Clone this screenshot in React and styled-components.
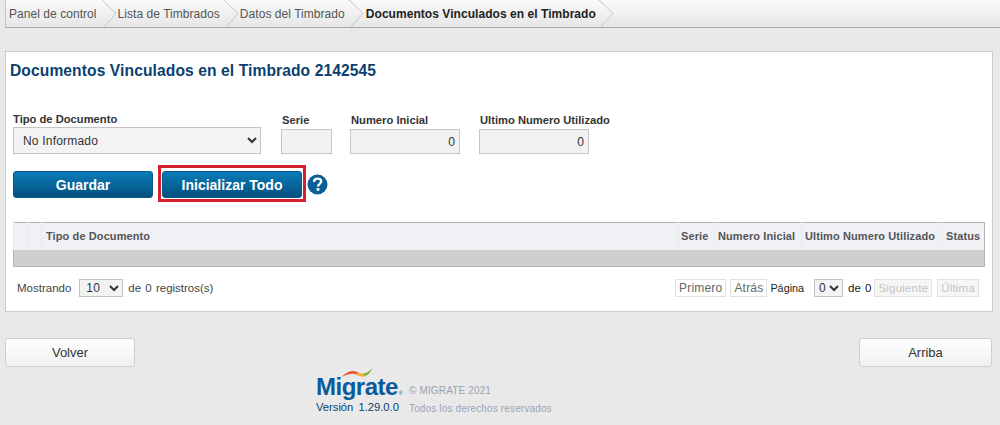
import React from "react";
import styled, { createGlobalStyle } from "styled-components";

const Global = createGlobalStyle`
  html, body { margin: 0; padding: 0; height: 425px; overflow: hidden; }
  body { background: #e9e9e9; font-family: "Liberation Sans", Arial, sans-serif; color: #333; }
`;
const Page = styled.div`display: flex; flex-direction: column; height: 425px;`;
const Crumbs = styled.nav`
  display: flex; align-items: stretch; height: 27px; margin-left: 5px;
  background: linear-gradient(#fafafa, #e6e6e6);
  border-left: 1px solid #c4c4c4; border-bottom: 1px solid #a9a9a9;
  font-size: 12px; letter-spacing: 0.05px;
`;
const Crumb = styled.div`
  display: flex; align-items: center; padding-left: ${p => p.$pad}px; color: ${p => p.$active ? "#222" : "#555"};
  font-weight: ${p => p.$active ? 700 : 400}; white-space: nowrap;
`;
const Chevron = styled.svg`width: 16px; height: 27px; flex: none; margin-left: ${p => p.$gap}px;`;
const Panel = styled.section`
  margin: 23px 7px 0 5px; height: 261px; box-sizing: border-box; background: #fff;
  border: 1px solid #cbcbcb; padding: 10px 6px 0 4px;
`;
const Title = styled.h1`margin: 0; font-size: 15.6px; line-height: 17px; font-weight: 700; color: #0b3f70; letter-spacing: 0.1px;`;
const FormRow = styled.div`display: flex; align-items: flex-end; margin: 31px 0 0 3px; height: 44px;`;
const Field = styled.div`display: flex; flex-direction: column; margin-left: ${p => p.$ml || 0}px;`;
const Label = styled.label`font-size: 11.2px; line-height: 14px; font-weight: 700; color: #333; margin-left: ${p => p.$ml || 0}px; margin-bottom: ${p => p.$mb}px; white-space: nowrap;`;
const Select = styled.select`
  width: ${p => p.$w}px; height: ${p => p.$h}px; box-sizing: border-box; background: #f3f3f3; color: #333;
  border: 1px solid #c4c4c4; font: ${p => p.$fs}px "Liberation Sans", Arial, sans-serif; padding-left: ${p => p.$pl}px; border-radius: 0;
  letter-spacing: 0.2px;
`;
const Input = styled.input`
  width: ${p => p.$w}px; height: 25px; box-sizing: border-box; background: #f2f2f2; border: 1px solid #c6c6c6;
  text-align: right; padding: 0 4px 0 0; font: 12px "Liberation Sans", Arial, sans-serif; color: #333;
`;
const Actions = styled.div`display: flex; align-items: center; margin: 17px 0 0 3px; height: 27px;`;
const Primary = styled.button`
  width: 140px; height: 27px; border: 1px solid #0a5a8e; border-radius: 3px; color: #fff; font: 700 14px "Liberation Sans", Arial, sans-serif;
  background: linear-gradient(#0a7cb8, #04507f); padding: 0; flex: none;
`;
const Highlight = styled.div`
  display: flex; flex: none; align-self: flex-start; margin: -6px 0 0 5px; padding: 3px 1px 1px; border: 3px solid #d3202c;
`;
const Help = styled.svg`width: 21px; height: 21px; margin-left: 1px; flex: none;`;
const Table = styled.table`
  width: 972px; margin: 24px 0 0 3px; border-collapse: collapse; table-layout: fixed; border: 1px solid #b5b5b5;
  font-size: 11px;
`;
const Th = styled.th`
  height: 27px; padding: 0 0 0 ${p => p.$pl || 0}px; background: #f0f1f5; color: #555; font-weight: 700; text-align: left; white-space: nowrap;
  border-left: 1px solid #eaebef; box-sizing: border-box; letter-spacing: 0.1px;
`;
const EmptyCell = styled.td`height: 16px; padding: 0; background: #cfcfcf;`;
const Pager = styled.div`display: flex; align-items: center; justify-content: space-between; margin: 12px 7px 0 7px; height: 18px; font-size: 11.5px; color: #444;`;
const Group = styled.div`display: flex; align-items: center;`;
const Txt = styled.span`margin: 0 ${p => p.$mr || 0}px 0 ${p => p.$ml || 0}px; white-space: nowrap; color: ${p => p.$c || "inherit"}; font-size: ${p => p.$fs || 11.5}px; word-spacing: 1px;`;
const PageBtn = styled.span`
  height: 16px; line-height: 16px; padding: 0 3px; border: 1px solid #e2e2e2; background: ${p => p.$off ? "#f6f6f6" : "#fff"}; color: ${p => p.$off ? "#c4c4c4" : "#666"};
  font-size: ${p => p.$off ? 11.5 : 12}px; margin-left: ${p => p.$ml || 0}px; letter-spacing: 0.2px;
`;
const NavRow = styled.div`display: flex; justify-content: space-between; margin: 26px 8px 0 5px;`;
const NavBtn = styled.button`
  width: ${p => p.$w}px; height: 29px; background: linear-gradient(#fff, #f0f0f0); border: 1px solid #cfcfcf; border-radius: 3px;
  font: 13px "Liberation Sans", Arial, sans-serif; color: #333; padding: 0;
`;
const Foot = styled.footer`display: flex; margin: 0 0 0 316px;`;
const Brand = styled.div`display: flex; flex-direction: column; width: 93px; position: relative;`;
const Swoosh = styled.svg`position: absolute; left: 24px; top: 0; width: 34px; height: 11px;`;
const Logo = styled.div`font: 700 24px/24px "Liberation Sans", Arial, sans-serif; color: #0a5a9c; letter-spacing: -0.5px; margin-top: 8px; height: 24px; white-space: nowrap;`;
const Reg = styled.span`font-size: 5px; letter-spacing: 0; font-weight: 400; margin-left: 1px;`;
const Version = styled.div`font-size: 11.2px; line-height: 14px; color: #0b3f70; margin-top: 1px; word-spacing: 2px; white-space: nowrap;`;
const Legal = styled.div`display: flex; flex-direction: column; font-size: 10px; color: #9aa3b2; margin-top: 18px; gap: 6px; line-height: 12px; letter-spacing: 0.15px;`;

const Arrow = ({ gap }) => (
  <Chevron $gap={gap} viewBox="0 0 16 27" aria-hidden="true">
    <path d="M0 0 L14 13.5 L2 27" fill="none" stroke="#c6c6c6" />
  </Chevron>
);

export default function App() {
  return (
    <Page>
      <Global />
      <Crumbs>
        <Crumb $pad={3}>Panel de control</Crumb>
        <Arrow gap={5} />
        <Crumb $pad={0}>Lista de Timbrados</Crumb>
        <Arrow gap={4} />
        <Crumb $pad={0}>Datos del Timbrado</Crumb>
        <Arrow gap={4} />
        <Crumb $pad={1} $active>Documentos Vinculados en el Timbrado</Crumb>
        <Arrow gap={3} />
      </Crumbs>
      <Panel>
        <Title>Documentos Vinculados en el Timbrado 2142545</Title>
        <FormRow>
          <Field>
            <Label $mb={1}>Tipo de Documento</Label>
            <Select $w={248} $h={27} $fs={12} $pl={5} defaultValue="n"><option value="n">No Informado</option></Select>
          </Field>
          <Field $ml={20}>
            <Label $mb={2} $ml={1}>Serie</Label>
            <Input $w={51} readOnly />
          </Field>
          <Field $ml={18}>
            <Label $mb={2} $ml={1}>Numero Inicial</Label>
            <Input $w={110} readOnly value="0" />
          </Field>
          <Field $ml={19}>
            <Label $mb={2} $ml={1}>Ultimo Numero Utilizado</Label>
            <Input $w={110} readOnly value="0" />
          </Field>
        </FormRow>
        <Actions>
          <Primary>Guardar</Primary>
          <Highlight><Primary>Inicializar Todo</Primary></Highlight>
          <Help viewBox="0 0 21 21" aria-hidden="true">
            <circle cx="10.5" cy="10.5" r="10" fill="#0a5f96" />
            <path d="M7 8 C7 5.6 8.6 4.6 10.6 4.6 C12.7 4.6 14.2 5.8 14.2 7.6 C14.2 9.8 11 10 11 12.4" fill="none" stroke="#fff" strokeWidth="2.3" />
            <rect x="9.6" y="14" width="2.8" height="2.8" fill="#fff" />
          </Help>
        </Actions>
        <Table>
          <colgroup>
            <col style={{ width: 14 }} /><col style={{ width: 14 }} /><col />
            <col style={{ width: 36 }} /><col style={{ width: 87 }} /><col style={{ width: 140 }} /><col style={{ width: 43 }} />
          </colgroup>
          <thead>
            <tr>
              <Th /><Th />
              <Th $pl={4}>Tipo de Documento</Th>
              <Th $pl={2}>Serie</Th>
              <Th $pl={3}>Numero Inicial</Th>
              <Th $pl={3}>Ultimo Numero Utilizado</Th>
              <Th $pl={4}>Status</Th>
            </tr>
          </thead>
          <tbody><tr><EmptyCell colSpan={7} /></tr></tbody>
        </Table>
        <Pager>
          <Group>
            <Txt $mr={8}>Mostrando</Txt>
            <Select $w={44} $h={18} $fs={12} $pl={2} defaultValue="10"><option>10</option></Select>
            <Txt $ml={5}>de 0 registros(s)</Txt>
          </Group>
          <Group>
            <PageBtn>Primero</PageBtn>
            <PageBtn $ml={4}>Atrás</PageBtn>
            <Txt $ml={3} $mr={10} $c="#222" $fs={10.8}>Página</Txt>
            <Select $w={29} $h={18} $fs={12} $pl={0} defaultValue="0"><option>0</option></Select>
            <Txt $ml={5} $mr={3} $c="#222">de 0</Txt>
            <PageBtn $off>Siguiente</PageBtn>
            <PageBtn $off $ml={5}>Última</PageBtn>
          </Group>
        </Pager>
      </Panel>
      <NavRow>
        <NavBtn $w={130}>Volver</NavBtn>
        <NavBtn $w={133}>Arriba</NavBtn>
      </NavRow>
      <Foot>
        <Brand>
          <Swoosh viewBox="0 0 36 12" aria-hidden="true">
            <path d="M1 11 C8 4 14 3 20 6 L20 9 C14 6 8 7 1 11Z" fill="#e2582a" />
            <path d="M18 6 C22 7 25 8 28 6 L27 10 C24 11 21 10 18 9Z" fill="#e9b52a" />
            <path d="M26 7 C29 6 32 4 35 1 C33 6 30 9 26 10Z" fill="#7fb23c" />
          </Swoosh>
          <Logo>Migrate<Reg>®</Reg></Logo>
          <Version>Versión 1.29.0.0</Version>
        </Brand>
        <Legal>
          <span>© MIGRATE 2021</span>
          <span>Todos los derechos reservados</span>
        </Legal>
      </Foot>
    </Page>
  );
}
